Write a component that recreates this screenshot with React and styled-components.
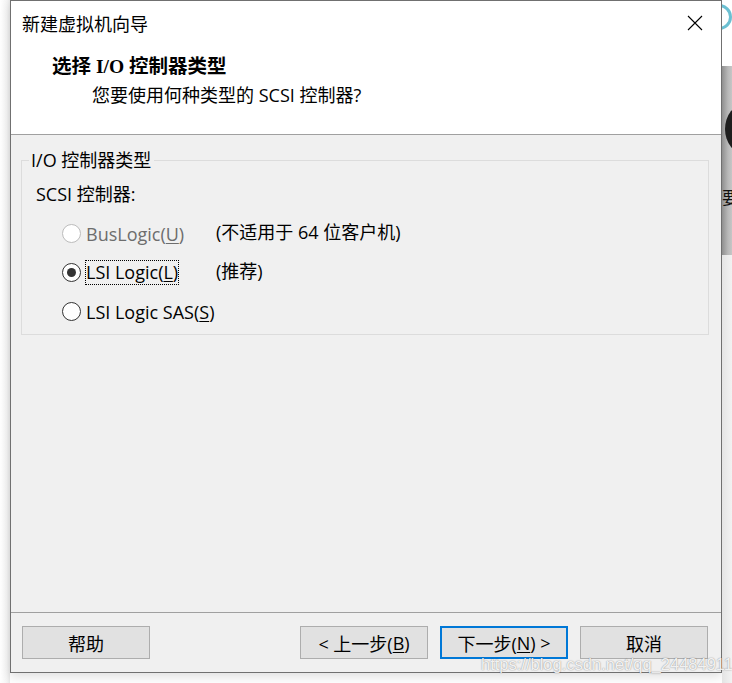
import React from "react";
import styled, { createGlobalStyle } from "styled-components";

const Global = createGlobalStyle`
  html, body { margin: 0; padding: 0; background: #ffffff; }
  body { font-family: "Open Sans", "Noto Sans CJK SC", sans-serif; }
  * { box-sizing: border-box; }
`;

const Page = styled.div`
  position: relative;
  width: 732px;
  height: 683px;
  display: flex;
  align-items: flex-start;
  overflow: hidden;
  background: #ffffff;
`;

const LeftGutter = styled.div`
  width: 10px;
  height: 683px;
  background: linear-gradient(to right, #ffffff 0%, #f4f4f4 70%, #e8e8e8 100%);
`;

const RightGutter = styled.div`
  width: 10px;
  height: 683px;
  display: flex;
  flex-direction: column;
`;

const GutterTop = styled.div`
  height: 66px;
  background: #ffffff;
  position: relative;
  overflow: hidden;
`;

const TealRing = styled.div`
  position: absolute;
  left: -16px;
  top: 4px;
  width: 26px;
  height: 26px;
  border-radius: 50%;
  border: 3px solid #6cc0d2;
`;

const GutterMid = styled.div`
  height: 189px;
  background: linear-gradient(to right, #8f8f8f 0%, #b8b8b8 60%, #c6c6c6 100%);
  position: relative;
  overflow: hidden;
`;

const DarkArc = styled.div`
  position: absolute;
  left: 3px;
  top: 38px;
  width: 40px;
  height: 50px;
  border-radius: 50%;
  background: #1e1e1e;
`;

const GutterGlyph = styled.div`
  position: absolute;
  left: 0;
  top: 121px;
  width: 10px;
  overflow: hidden;
  font-family: "Noto Sans CJK SC", sans-serif;
  font-size: 17px;
  line-height: 20px;
  color: #111;
`;

const GutterLow = styled.div`
  flex: 1;
  background: linear-gradient(to right, #e4e4e4 0%, #f2f2f2 100%);
`;

const Dialog = styled.div`
  width: 712px;
  height: 673px;
  border: 1px solid #707070;
  background: #f0f0f0;
  display: flex;
  flex-direction: column;
  box-shadow: 0 4px 10px rgba(0, 0, 0, 0.12);
  font-family: "Open Sans", "Noto Sans CJK SC", sans-serif;
  color: #000;
`;

const Header = styled.div`
  height: 134px;
  background: #ffffff;
  border-bottom: 1px solid #a0a0a0;
  display: flex;
  flex-direction: column;
`;

const TitleBar = styled.div`
  height: 44px;
  display: flex;
  align-items: center;
  justify-content: space-between;
  padding: 0 14px 0 11px;
`;

const Title = styled.div`
  font-family: "Noto Sans CJK SC", sans-serif;
  font-size: 18px;
  line-height: 22px;
  margin-top: -1px;
`;

const CloseButton = styled.button`
  width: 24px;
  height: 24px;
  border: none;
  background: transparent;
  padding: 0;
  display: flex;
  align-items: center;
  justify-content: center;
`;

const Heading = styled.div`
  margin: 10px 0 0 41px;
  font-family: "Liberation Serif", "Noto Sans CJK SC", serif;
  font-weight: 700;
  font-size: 19.5px;
  line-height: 24px;
`;

const SubHeading = styled.div`
  margin: 5px 0 0 81px;
  font-size: 18px;
  line-height: 22px;
`;

const Body = styled.div`
  flex: 1;
  padding: 14px 12px 0 10px;
`;

const Group = styled.fieldset`
  margin: 0;
  padding: 11px 0 10px 14px;
  border: 1px solid #dcdcdc;
  height: 186px;
`;

const Legend = styled.legend`
  padding: 0 3px 0 2px;
  margin-left: -7px;
  font-size: 18px;
  line-height: 22px;
`;

const GroupLabel = styled.div`
  font-size: 18px;
  line-height: 24px;
  margin-bottom: 16px;
`;

const OptionList = styled.div`
  display: flex;
  flex-direction: column;
  gap: 16px;
  padding-left: 26px;
`;

const OptionRow = styled.div`
  display: flex;
  align-items: center;
  height: 23px;
`;

const RadioCircle = styled.span`
  width: 19px;
  height: 19px;
  border-radius: 50%;
  border: 1px solid ${(p) => (p.$disabled ? "#bcbcbc" : "#333333")};
  background: #ffffff;
  display: flex;
  align-items: center;
  justify-content: center;
  flex: none;
  &::after {
    content: "";
    width: 9px;
    height: 9px;
    border-radius: 50%;
    background: #333333;
    display: ${(p) => (p.$checked ? "block" : "none")};
  }
`;

const OptionLabel = styled.span`
  margin-left: 5px;
  width: 125px;
  flex: none;
  white-space: nowrap;
  font-size: 18px;
  line-height: 22px;
  color: ${(p) => (p.$disabled ? "#6d6d6d" : "#000")};
`;

const FocusBox = styled.span`
  display: inline-block;
  padding: 0 0 1px 0;
  outline: 1px dotted #000;
`;

const Key = styled.span`
  text-decoration: underline;
  text-underline-offset: 2px;
`;

const Note = styled.span`
  font-size: 18px;
  line-height: 22px;
  margin-left: 5px;
  margin-top: -4px;
  white-space: nowrap;
`;

const Footer = styled.div`
  height: 60px;
  border-top: 1px solid #a0a0a0;
  display: flex;
  align-items: flex-start;
  padding: 13px 13px 0 11px;
`;

const Spacer = styled.div`
  flex: 1;
`;

const Button = styled.button`
  width: 128px;
  height: 33px;
  background: #e1e1e1;
  border: ${(p) => (p.$primary ? "2px solid #0078d7" : "1px solid #adadad")};
  font-family: "Open Sans", "Noto Sans CJK SC", sans-serif;
  font-size: 18px;
  color: #000;
  padding: 0;
  margin-left: ${(p) => p.$gap || 0}px;
  display: flex;
  align-items: center;
  justify-content: center;
  white-space: pre;
`;

const Watermark = styled.div`
  position: absolute;
  left: 481px;
  top: 654px;
  font-family: "Liberation Sans", Arial, sans-serif;
  font-size: 16.5px;
  line-height: 20px;
  color: rgba(255, 255, 255, 0.9);
  text-shadow: 0 0 1px rgba(0, 0, 0, 0.35), 0 0 2px rgba(0, 0, 0, 0.2);
  white-space: nowrap;
  pointer-events: none;
`;

export default function App() {
  return (
    <>
      <Global />
      <Page>
        <LeftGutter />
        <Dialog>
          <Header>
            <TitleBar>
              <Title>新建虚拟机向导</Title>
              <CloseButton aria-label="关闭">
                <svg width="16" height="16" viewBox="0 0 16 16">
                  <path d="M1 1 L15 15 M15 1 L1 15" stroke="#000" strokeWidth="1.1" />
                </svg>
              </CloseButton>
            </TitleBar>
            <Heading>选择 I/O 控制器类型</Heading>
            <SubHeading>您要使用何种类型的 SCSI 控制器?</SubHeading>
          </Header>
          <Body>
            <Group>
              <Legend>I/O 控制器类型</Legend>
              <GroupLabel>SCSI 控制器:</GroupLabel>
              <OptionList>
                <OptionRow>
                  <RadioCircle $disabled />
                  <OptionLabel $disabled>
                    BusLogic(<Key>U</Key>)
                  </OptionLabel>
                  <Note>(不适用于 64 位客户机)</Note>
                </OptionRow>
                <OptionRow>
                  <RadioCircle $checked />
                  <OptionLabel>
                    <FocusBox>
                      LSI Logic(<Key>L</Key>)
                    </FocusBox>
                  </OptionLabel>
                  <Note>(推荐)</Note>
                </OptionRow>
                <OptionRow>
                  <RadioCircle />
                  <OptionLabel>
                    LSI Logic SAS(<Key>S</Key>)
                  </OptionLabel>
                </OptionRow>
              </OptionList>
            </Group>
          </Body>
          <Footer>
            <Button>帮助</Button>
            <Spacer />
            <Button>
              {"< 上一步("}<Key>B</Key>{")"}
            </Button>
            <Button $primary $gap={12}>
              {"下一步("}<Key>N</Key>{") >"}
            </Button>
            <Button $gap={12}>取消</Button>
          </Footer>
        </Dialog>
        <RightGutter>
          <GutterTop>
            <TealRing />
          </GutterTop>
          <GutterMid>
            <DarkArc />
            <GutterGlyph>要</GutterGlyph>
          </GutterMid>
          <GutterLow />
        </RightGutter>
        <Watermark>https://blog.csdn.net/qq_24484911</Watermark>
      </Page>
    </>
  );
}
